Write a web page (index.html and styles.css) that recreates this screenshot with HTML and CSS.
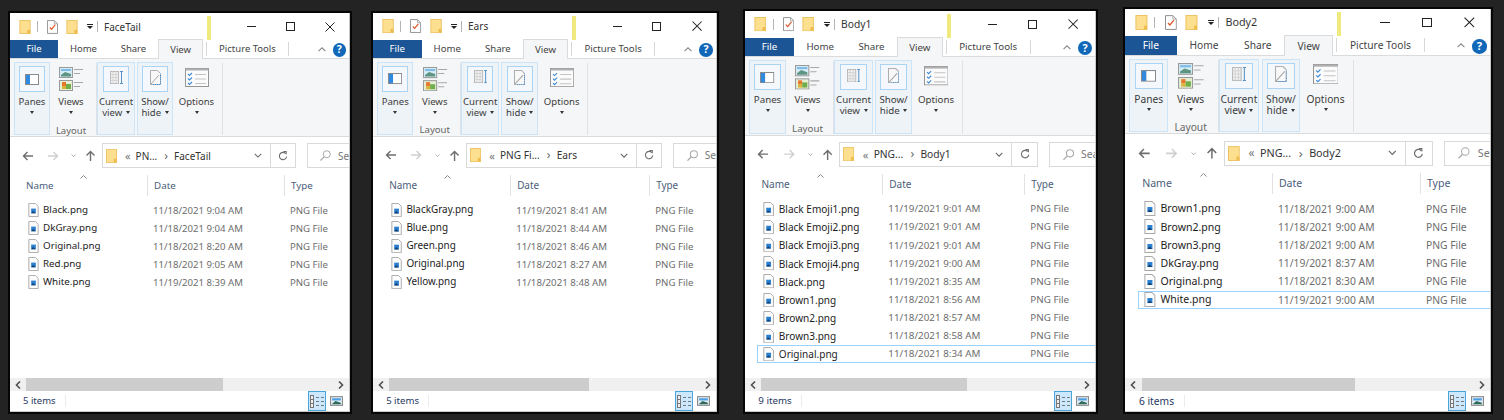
FILE: index.html
```html
<!DOCTYPE html>
<html lang="en">
<head>
<meta charset="utf-8">
<title>Explorer windows</title>
<link rel="stylesheet" href="styles.css">
</head>
<body>
<svg class="defs" aria-hidden="true">
  <symbol id="folder" viewBox="0 0 12 15"><rect x=".5" y=".5" width="11" height="14" fill="#fde08f" stroke="#edc262"/><rect x="8.5" y="10.5" width="3" height="4" fill="#eebd4e"/></symbol>
  <symbol id="doccheck" viewBox="0 0 12 15"><path d="M.5.5H8L11.5 4V14.5H.5Z" fill="#fff" stroke="#8d8d8d"/><path d="M8 .5V4H11.5" fill="none" stroke="#aaa"/><path d="M3 8l2 2 4-5" fill="none" stroke="#e0562a" stroke-width="1.3"/></symbol>
  <symbol id="png" viewBox="0 0 11 15"><path d="M.5.5H7.5L10.500 3.500V14.500H.5Z" fill="#fdfdfd" stroke="#a8a8a8"/><rect x="3" y="6" width="5" height="5" fill="#2a7fd0"/><path d="M3 11L5 8.500 8 11Z" fill="#123f6e"/></symbol>
  <symbol id="panes" viewBox="0 0 14 11"><rect width="14" height="11" fill="#8a8a8a"/><rect x="1" y="1" width="4" height="9" fill="#2f8ae0"/><rect x="5" y="1" width="8" height="9" fill="#fff"/></symbol>
  <symbol id="views" viewBox="0 0 24 24"><rect x=".5" y=".5" width="13" height="10" fill="#d4ecf7" stroke="#9a9a9a"/><path d="M2 8L6 5 12 7V9.500H2Z" fill="#5f9580"/><rect x="2" y="2" width="10" height="2" fill="#7fbbe4"/><rect x=".5" y="13.500" width="13" height="10" fill="#e6efd4" stroke="#9a9a9a"/><rect x="3" y="15" width="4" height="4" fill="#e8772e"/><rect x="7" y="17" width="5" height="5" fill="#6fae4c"/><rect x="3" y="19" width="4" height="3" fill="#d9b338"/><path d="M15 2.500H24M15 6.500H21M15 15.500H24M15 19.500H21" stroke="#a8a8a8"/></symbol>
  <symbol id="current" viewBox="0 0 13 13"><rect x=".5" y=".5" width="8" height="12" fill="#f2f2f2" stroke="#b8b8b8"/><path d="M.5 3.500H8.500M.5 6.500H8.500M.5 9.500H8.500M3 .5V12.500M6 .5V12.500" stroke="#d4d4d4"/><path d="M11.500 0V13M10 .5H13M10 12.500H13" stroke="#5b93c4"/></symbol>
  <symbol id="show" viewBox="0 0 11 15"><path d="M.5.5H7.500L10.500 3.500V14.500H.5Z" fill="#f8f8f8" stroke="#aeaeae"/><path d="M.5 14.500L9 5" stroke="#a6a6a6"/><path d="M10.500 5V14.500H2" fill="none" stroke="#3a8fdb" stroke-dasharray="1 1"/></symbol>
  <symbol id="options" viewBox="0 0 24 19"><rect x=".5" y=".5" width="23" height="18" fill="#fbfbfb" stroke="#969696"/><rect x=".5" y=".5" width="23" height="2" fill="#b0b0b0"/><path d="M3 6l1.500 1.500L7 5M3 10.500l1.500 1.500L7 9.500M3 15l1.500 1.500L7 14" fill="none" stroke="#3f8ad6" stroke-width="1.100"/><path d="M10 6.500H21M10 11H21M10 15.500H21" stroke="#c4c4c4"/></symbol>
  <symbol id="arrow" viewBox="0 0 11 10"><path d="M11 5H1.500M5.500 1L1.500 5 5.500 9" fill="none" stroke="currentColor" stroke-width="1.400"/></symbol>
  <symbol id="up" viewBox="0 0 11 11"><path d="M5.500 11V1.500M1.500 5.500L5.500 1.500 9.500 5.500" fill="none" stroke="#6e6e6e" stroke-width="1.400"/></symbol>
  <symbol id="chev" viewBox="0 0 10 6"><path d="M1 1L5 5 9 1" fill="none" stroke="currentColor" stroke-width="1.300"/></symbol>
  <symbol id="refresh" viewBox="0 0 11 11"><path d="M8.500 2.800A4 4 0 1 0 9.500 6" fill="none" stroke="#6e6e6e" stroke-width="1.200"/><path d="M6 .5H9V3.500" fill="none" stroke="#6e6e6e" stroke-width="1.200"/></symbol>
  <symbol id="search" viewBox="0 0 11 11"><circle cx="6.800" cy="4.200" r="3.500" fill="none" stroke="#a8a8a8"/><path d="M4.300 6.700L.5 10.500" stroke="#a8a8a8" stroke-width="1.200"/></symbol>
  <symbol id="close" viewBox="0 0 10 10"><path d="M.5.5L9.500 9.500M9.500.5L.5 9.500" stroke="#222" stroke-width="1"/></symbol>
  <symbol id="caret" viewBox="0 0 7 4"><path d="M.5 3.500L3.500.5 6.500 3.500" fill="none" stroke="#8a8a8a"/></symbol>
  <symbol id="left" viewBox="0 0 6 8"><path d="M5 .5L1.500 4 5 7.500" fill="none" stroke="#505050" stroke-width="1.600"/></symbol>
  <symbol id="right" viewBox="0 0 6 8"><path d="M1 .5L4.500 4 1 7.500" fill="none" stroke="#505050" stroke-width="1.600"/></symbol>
  <symbol id="details" viewBox="0 0 14 13"><rect x=".5" y=".5" width="3" height="12" fill="#eee" stroke="#777"/><path d="M.5 4.500H3.500M.5 8.500H3.500" stroke="#777"/><path d="M6 2.500H9M11 2.500H14M6 6.500H9M11 6.500H14M6 10.500H9M11 10.500H14" stroke="#777"/></symbol>
  <symbol id="thumb" viewBox="0 0 12 9"><rect x=".5" y=".5" width="11" height="8" fill="#e4eef6" stroke="#8a8a8a"/><rect x="2" y="2" width="8" height="2" fill="#4a9de0"/><path d="M2 7L5 4.500 10 6V7.500H2Z" fill="#2f6b58"/></symbol>
</svg>

<main class="desk">

<section class="win w1">
  <header class="title">
    <div class="tleft">
      <svg class="qa-f"><use href="#folder"/></svg><i class="qs"></i>
      <svg class="qa-d"><use href="#doccheck"/></svg>
      <svg class="qa-g"><use href="#folder"/></svg>
      <span class="qa-m"></span><i class="qs q2"></i>
      <span class="ttext">FaceTail</span>
    </div>
    <i class="ybar"></i>
    <span class="wmin"></span><span class="wmax"></span><svg class="wclose"><use href="#close"/></svg>
  </header>
  <nav class="tabs">
    <span class="tab file">File</span><span class="tab">Home</span><span class="tab">Share</span><span class="tab on">View</span>
    <span class="tab pic">Picture Tools</span>
    <svg class="collapse"><use href="#caret"/></svg><span class="help">?</span>
  </nav>
  <div class="ribbon">
    <div class="rb hot panes"><span class="box"><svg class="i-panes"><use href="#panes"/></svg></span><span class="lb">Panes</span><span class="dn"></span></div>
    <div class="rb viewsb"><span class="bare"><svg class="i-views"><use href="#views"/></svg></span><span class="lb">Views</span><span class="dn"></span><span class="grp">Layout</span></div>
    <i class="rsep"></i>
    <div class="rb hot cur"><span class="box"><svg class="i-cur"><use href="#current"/></svg></span><span class="lb">Current</span><span class="lb">view <b class="dni"></b></span></div>
    <div class="rb hot shw"><span class="box"><svg class="i-show"><use href="#show"/></svg></span><span class="lb">Show/</span><span class="lb">hide <b class="dni"></b></span></div>
    <div class="rb opt"><span class="bare"><svg class="i-opt"><use href="#options"/></svg></span><span class="lb">Options</span><span class="dn"></span></div>
    <i class="rsep"></i>
  </div>
  <div class="nav">
    <svg class="back"><use href="#arrow"/></svg><svg class="fwd"><use href="#arrow"/></svg><svg class="hist"><use href="#chev"/></svg><svg class="upa"><use href="#up"/></svg>
    <div class="addr"><svg class="a-f"><use href="#folder"/></svg><span class="lq">«</span><span class="cr">PN...</span><span class="gt">›</span><span class="cr">FaceTail</span><svg class="a-c"><use href="#chev"/></svg><span class="a-r"><svg class="a-ri"><use href="#refresh"/></svg></span></div>
    <div class="srch"><svg class="s-i"><use href="#search"/></svg><span class="s-t">Search</span></div>
  </div>
  <div class="cols"><span class="h hn">Name<svg class="sort"><use href="#caret"/></svg></span><span class="h">Date</span><span class="h">Type</span></div>
  <ul class="list">
    <li class="row"><span class="fn"><svg class="pi"><use href="#png"/></svg>Black.png</span><span class="dt">11/18/2021 9:04 AM</span><span class="dt">PNG File</span></li>
    <li class="row"><span class="fn"><svg class="pi"><use href="#png"/></svg>DkGray.png</span><span class="dt">11/18/2021 9:04 AM</span><span class="dt">PNG File</span></li>
    <li class="row"><span class="fn"><svg class="pi"><use href="#png"/></svg>Original.png</span><span class="dt">11/18/2021 8:20 AM</span><span class="dt">PNG File</span></li>
    <li class="row"><span class="fn"><svg class="pi"><use href="#png"/></svg>Red.png</span><span class="dt">11/18/2021 9:05 AM</span><span class="dt">PNG File</span></li>
    <li class="row"><span class="fn"><svg class="pi"><use href="#png"/></svg>White.png</span><span class="dt">11/19/2021 8:39 AM</span><span class="dt">PNG File</span></li>
  </ul>
  <div class="hbar"><svg class="sl"><use href="#left"/></svg><i class="sth"></i><svg class="sr"><use href="#right"/></svg></div>
  <footer class="status"><span class="cnt">5 items</span><span class="vbtn"><svg class="v-d"><use href="#details"/></svg></span><svg class="v-t"><use href="#thumb"/></svg></footer>
</section>

<section class="win w2">
  <header class="title">
    <div class="tleft">
      <svg class="qa-f"><use href="#folder"/></svg><i class="qs"></i>
      <svg class="qa-d"><use href="#doccheck"/></svg>
      <svg class="qa-g"><use href="#folder"/></svg>
      <span class="qa-m"></span><i class="qs q2"></i>
      <span class="ttext">Ears</span>
    </div>
    <i class="ybar"></i>
    <span class="wmin"></span><span class="wmax"></span><svg class="wclose"><use href="#close"/></svg>
  </header>
  <nav class="tabs">
    <span class="tab file">File</span><span class="tab">Home</span><span class="tab">Share</span><span class="tab on">View</span>
    <span class="tab pic">Picture Tools</span>
    <svg class="collapse"><use href="#caret"/></svg><span class="help">?</span>
  </nav>
  <div class="ribbon">
    <div class="rb hot panes"><span class="box"><svg class="i-panes"><use href="#panes"/></svg></span><span class="lb">Panes</span><span class="dn"></span></div>
    <div class="rb viewsb"><span class="bare"><svg class="i-views"><use href="#views"/></svg></span><span class="lb">Views</span><span class="dn"></span><span class="grp">Layout</span></div>
    <i class="rsep"></i>
    <div class="rb hot cur"><span class="box"><svg class="i-cur"><use href="#current"/></svg></span><span class="lb">Current</span><span class="lb">view <b class="dni"></b></span></div>
    <div class="rb hot shw"><span class="box"><svg class="i-show"><use href="#show"/></svg></span><span class="lb">Show/</span><span class="lb">hide <b class="dni"></b></span></div>
    <div class="rb opt"><span class="bare"><svg class="i-opt"><use href="#options"/></svg></span><span class="lb">Options</span><span class="dn"></span></div>
    <i class="rsep"></i>
  </div>
  <div class="nav">
    <svg class="back"><use href="#arrow"/></svg><svg class="fwd"><use href="#arrow"/></svg><svg class="hist"><use href="#chev"/></svg><svg class="upa"><use href="#up"/></svg>
    <div class="addr"><svg class="a-f"><use href="#folder"/></svg><span class="lq">«</span><span class="cr">PNG Fi...</span><span class="gt">›</span><span class="cr">Ears</span><svg class="a-c"><use href="#chev"/></svg><span class="a-r"><svg class="a-ri"><use href="#refresh"/></svg></span></div>
    <div class="srch"><svg class="s-i"><use href="#search"/></svg><span class="s-t">Search</span></div>
  </div>
  <div class="cols"><span class="h hn">Name<svg class="sort"><use href="#caret"/></svg></span><span class="h">Date</span><span class="h">Type</span></div>
  <ul class="list">
    <li class="row"><span class="fn"><svg class="pi"><use href="#png"/></svg>BlackGray.png</span><span class="dt">11/19/2021 8:41 AM</span><span class="dt">PNG File</span></li>
    <li class="row"><span class="fn"><svg class="pi"><use href="#png"/></svg>Blue.png</span><span class="dt">11/18/2021 8:44 AM</span><span class="dt">PNG File</span></li>
    <li class="row"><span class="fn"><svg class="pi"><use href="#png"/></svg>Green.png</span><span class="dt">11/18/2021 8:46 AM</span><span class="dt">PNG File</span></li>
    <li class="row"><span class="fn"><svg class="pi"><use href="#png"/></svg>Original.png</span><span class="dt">11/18/2021 8:27 AM</span><span class="dt">PNG File</span></li>
    <li class="row"><span class="fn"><svg class="pi"><use href="#png"/></svg>Yellow.png</span><span class="dt">11/18/2021 8:48 AM</span><span class="dt">PNG File</span></li>
  </ul>
  <div class="hbar"><svg class="sl"><use href="#left"/></svg><i class="sth"></i><svg class="sr"><use href="#right"/></svg></div>
  <footer class="status"><span class="cnt">5 items</span><span class="vbtn"><svg class="v-d"><use href="#details"/></svg></span><svg class="v-t"><use href="#thumb"/></svg></footer>
</section>

<section class="win w3">
  <header class="title">
    <div class="tleft">
      <svg class="qa-f"><use href="#folder"/></svg><i class="qs"></i>
      <svg class="qa-d"><use href="#doccheck"/></svg>
      <svg class="qa-g"><use href="#folder"/></svg>
      <span class="qa-m"></span><i class="qs q2"></i>
      <span class="ttext">Body1</span>
    </div>
    <i class="ybar"></i>
    <span class="wmin"></span><span class="wmax"></span><svg class="wclose"><use href="#close"/></svg>
  </header>
  <nav class="tabs">
    <span class="tab file">File</span><span class="tab">Home</span><span class="tab">Share</span><span class="tab on">View</span>
    <span class="tab pic">Picture Tools</span>
    <svg class="collapse"><use href="#caret"/></svg><span class="help">?</span>
  </nav>
  <div class="ribbon">
    <div class="rb hot panes"><span class="box"><svg class="i-panes"><use href="#panes"/></svg></span><span class="lb">Panes</span><span class="dn"></span></div>
    <div class="rb viewsb"><span class="bare"><svg class="i-views"><use href="#views"/></svg></span><span class="lb">Views</span><span class="dn"></span><span class="grp">Layout</span></div>
    <i class="rsep"></i>
    <div class="rb hot cur"><span class="box"><svg class="i-cur"><use href="#current"/></svg></span><span class="lb">Current</span><span class="lb">view <b class="dni"></b></span></div>
    <div class="rb hot shw"><span class="box"><svg class="i-show"><use href="#show"/></svg></span><span class="lb">Show/</span><span class="lb">hide <b class="dni"></b></span></div>
    <div class="rb opt"><span class="bare"><svg class="i-opt"><use href="#options"/></svg></span><span class="lb">Options</span><span class="dn"></span></div>
    <i class="rsep"></i>
  </div>
  <div class="nav">
    <svg class="back"><use href="#arrow"/></svg><svg class="fwd"><use href="#arrow"/></svg><svg class="hist"><use href="#chev"/></svg><svg class="upa"><use href="#up"/></svg>
    <div class="addr"><svg class="a-f"><use href="#folder"/></svg><span class="lq">«</span><span class="cr">PNG...</span><span class="gt">›</span><span class="cr">Body1</span><svg class="a-c"><use href="#chev"/></svg><span class="a-r"><svg class="a-ri"><use href="#refresh"/></svg></span></div>
    <div class="srch"><svg class="s-i"><use href="#search"/></svg><span class="s-t">Search</span></div>
  </div>
  <div class="cols"><span class="h hn">Name<svg class="sort"><use href="#caret"/></svg></span><span class="h">Date</span><span class="h">Type</span></div>
  <ul class="list">
    <li class="row"><span class="fn"><svg class="pi"><use href="#png"/></svg>Black Emoji1.png</span><span class="dt">11/19/2021 9:01 AM</span><span class="dt">PNG File</span></li>
    <li class="row"><span class="fn"><svg class="pi"><use href="#png"/></svg>Black Emoji2.png</span><span class="dt">11/19/2021 9:01 AM</span><span class="dt">PNG File</span></li>
    <li class="row"><span class="fn"><svg class="pi"><use href="#png"/></svg>Black Emoji3.png</span><span class="dt">11/19/2021 9:01 AM</span><span class="dt">PNG File</span></li>
    <li class="row"><span class="fn"><svg class="pi"><use href="#png"/></svg>Black Emoji4.png</span><span class="dt">11/19/2021 9:00 AM</span><span class="dt">PNG File</span></li>
    <li class="row"><span class="fn"><svg class="pi"><use href="#png"/></svg>Black.png</span><span class="dt">11/19/2021 8:35 AM</span><span class="dt">PNG File</span></li>
    <li class="row"><span class="fn"><svg class="pi"><use href="#png"/></svg>Brown1.png</span><span class="dt">11/18/2021 8:56 AM</span><span class="dt">PNG File</span></li>
    <li class="row"><span class="fn"><svg class="pi"><use href="#png"/></svg>Brown2.png</span><span class="dt">11/18/2021 8:57 AM</span><span class="dt">PNG File</span></li>
    <li class="row"><span class="fn"><svg class="pi"><use href="#png"/></svg>Brown3.png</span><span class="dt">11/18/2021 8:58 AM</span><span class="dt">PNG File</span></li>
    <li class="row sel"><span class="fn"><svg class="pi"><use href="#png"/></svg>Original.png</span><span class="dt">11/18/2021 8:34 AM</span><span class="dt">PNG File</span></li>
  </ul>
  <div class="hbar"><svg class="sl"><use href="#left"/></svg><i class="sth"></i><svg class="sr"><use href="#right"/></svg></div>
  <footer class="status"><span class="cnt">9 items</span><span class="vbtn"><svg class="v-d"><use href="#details"/></svg></span><svg class="v-t"><use href="#thumb"/></svg></footer>
</section>

<section class="win w4">
  <header class="title">
    <div class="tleft">
      <svg class="qa-f"><use href="#folder"/></svg><i class="qs"></i>
      <svg class="qa-d"><use href="#doccheck"/></svg>
      <svg class="qa-g"><use href="#folder"/></svg>
      <span class="qa-m"></span><i class="qs q2"></i>
      <span class="ttext">Body2</span>
    </div>
    <i class="ybar"></i>
    <span class="wmin"></span><span class="wmax"></span><svg class="wclose"><use href="#close"/></svg>
  </header>
  <nav class="tabs">
    <span class="tab file">File</span><span class="tab">Home</span><span class="tab">Share</span><span class="tab on">View</span>
    <span class="tab pic">Picture Tools</span>
    <svg class="collapse"><use href="#caret"/></svg><span class="help">?</span>
  </nav>
  <div class="ribbon">
    <div class="rb hot panes"><span class="box"><svg class="i-panes"><use href="#panes"/></svg></span><span class="lb">Panes</span><span class="dn"></span></div>
    <div class="rb viewsb"><span class="bare"><svg class="i-views"><use href="#views"/></svg></span><span class="lb">Views</span><span class="dn"></span><span class="grp">Layout</span></div>
    <i class="rsep"></i>
    <div class="rb hot cur"><span class="box"><svg class="i-cur"><use href="#current"/></svg></span><span class="lb">Current</span><span class="lb">view <b class="dni"></b></span></div>
    <div class="rb hot shw"><span class="box"><svg class="i-show"><use href="#show"/></svg></span><span class="lb">Show/</span><span class="lb">hide <b class="dni"></b></span></div>
    <div class="rb opt"><span class="bare"><svg class="i-opt"><use href="#options"/></svg></span><span class="lb">Options</span><span class="dn"></span></div>
    <i class="rsep"></i>
  </div>
  <div class="nav">
    <svg class="back"><use href="#arrow"/></svg><svg class="fwd"><use href="#arrow"/></svg><svg class="hist"><use href="#chev"/></svg><svg class="upa"><use href="#up"/></svg>
    <div class="addr"><svg class="a-f"><use href="#folder"/></svg><span class="lq">«</span><span class="cr">PNG...</span><span class="gt">›</span><span class="cr">Body2</span><svg class="a-c"><use href="#chev"/></svg><span class="a-r"><svg class="a-ri"><use href="#refresh"/></svg></span></div>
    <div class="srch"><svg class="s-i"><use href="#search"/></svg><span class="s-t">Search</span></div>
  </div>
  <div class="cols"><span class="h hn">Name<svg class="sort"><use href="#caret"/></svg></span><span class="h">Date</span><span class="h">Type</span></div>
  <ul class="list">
    <li class="row"><span class="fn"><svg class="pi"><use href="#png"/></svg>Brown1.png</span><span class="dt">11/18/2021 9:00 AM</span><span class="dt">PNG File</span></li>
    <li class="row"><span class="fn"><svg class="pi"><use href="#png"/></svg>Brown2.png</span><span class="dt">11/18/2021 9:00 AM</span><span class="dt">PNG File</span></li>
    <li class="row"><span class="fn"><svg class="pi"><use href="#png"/></svg>Brown3.png</span><span class="dt">11/18/2021 9:00 AM</span><span class="dt">PNG File</span></li>
    <li class="row"><span class="fn"><svg class="pi"><use href="#png"/></svg>DkGray.png</span><span class="dt">11/19/2021 8:37 AM</span><span class="dt">PNG File</span></li>
    <li class="row"><span class="fn"><svg class="pi"><use href="#png"/></svg>Original.png</span><span class="dt">11/18/2021 8:30 AM</span><span class="dt">PNG File</span></li>
    <li class="row sel"><span class="fn"><svg class="pi"><use href="#png"/></svg>White.png</span><span class="dt">11/19/2021 9:00 AM</span><span class="dt">PNG File</span></li>
  </ul>
  <div class="hbar"><svg class="sl"><use href="#left"/></svg><i class="sth"></i><svg class="sr"><use href="#right"/></svg></div>
  <footer class="status"><span class="cnt">6 items</span><span class="vbtn"><svg class="v-d"><use href="#details"/></svg></span><svg class="v-t"><use href="#thumb"/></svg></footer>
</section>

</main>
</body>
</html>
```
FILE: styles.css
```css
* { box-sizing: border-box; }
html, body { margin: 0; height: 100%; }
body { background: #232323; overflow: hidden; font-family: "Noto Sans", "Open Sans", sans-serif; color: #333; }
.defs { position: absolute; width: 0; height: 0; }
.desk { position: relative; width: 1504px; height: 420px; }
svg { display: block; flex: none; }
i, b { display: block; font-style: normal; }

.win {
  --k: 1; --v: 1; --c1: 125px; --c2: 137px; --th: 197px;
  position: absolute; display: flex; flex-direction: column; overflow: hidden;
  background: #fff; box-shadow: 0 0 0 2px #060606;
  border-right: 1px solid #c8c8c8; border-bottom: 1px solid #c8c8c8;
  font-size: calc(var(--k) * 9.5px); line-height: 1;
}
.w1 { left: 10px; top: 13px; width: 340px; height: 399px; }
.w2 { left: 373px; top: 13px; width: 344px; height: 399px; --k: 1.012; --c1: 125px; --c2: 139px; --th: 200px; }
.w3 { left: 745px; top: 11px; width: 351px; height: 401px; --k: 1.025; --v: 1.005; --c1: 125px; --c2: 142px; --th: 206px; }
.w4 { left: 1125px; top: 9px; width: 366px; height: 403px; --k: 1.076; --v: 1.012; --c1: 134px; --c2: 148px; --th: 213px; }

/* title bar */
.title { display: flex; align-items: center; height: calc(var(--v) * 27px); flex: none; }
.tleft { display: flex; align-items: center; width: calc(var(--k) * 197px); flex: none; }
.qa-f { margin-left: calc(var(--k) * 9px); width: calc(var(--k) * 12px); height: calc(var(--k) * 14px); }
.qs { width: 1px; height: 11px; background: #b5b5b5; margin-left: calc(var(--k) * 6px); }
.qa-d { margin-left: calc(var(--k) * 9px); width: calc(var(--k) * 11px); height: calc(var(--k) * 14px); }
.qa-g { margin-left: calc(var(--k) * 8px); width: calc(var(--k) * 12px); height: calc(var(--k) * 14px); }
.qa-m { margin-left: calc(var(--k) * 9px); width: 6px; height: 5px; border-top: 1px solid #222; position: relative; }
.qa-m::after { content: ""; position: absolute; left: 0; top: 1px; border: 3px solid transparent; border-top: 3px solid #222; border-bottom: 0; }
.q2 { margin-left: calc(var(--k) * 4px); }
.ttext { margin-left: calc(var(--k) * 6px); font-size: calc(var(--k) * 10px); color: #333; }
.ybar { align-self: stretch; margin-top: 3px; width: calc(var(--k) * 4px); background: #f0e97e; flex: none; }
.wmin { margin-left: calc(var(--k) * 36px); width: calc(var(--k) * 9px); height: 1px; background: #222; }
.wmax { margin-left: calc(var(--k) * 30px); width: calc(var(--k) * 9px); height: calc(var(--k) * 9px); border: 1px solid #222; }
.wclose { margin-left: calc(var(--k) * 30px); width: calc(var(--k) * 10px); height: calc(var(--k) * 10px); }

/* tabs */
.tabs { display: flex; align-items: stretch; height: calc(var(--v) * 19px); flex: none; border-bottom: 1px solid #dadbdc; color: #444; }
.tab { display: flex; align-items: center; padding: 0 calc(var(--k) * 11.900px); }
.file { width: calc(var(--k) * 48px); justify-content: center; padding: 0; background: #1c5595; color: #fff; }
.on { width: calc(var(--k) * 45px); justify-content: center; padding: 0; height: calc(var(--v) * 20px); margin-top: -1px; background: #f5f6f7; border: 1px solid #dadbdc; border-bottom: 0; }
.pic { margin-left: calc(var(--k) * 3px); height: calc(var(--v) * 14px); padding: 0 calc(var(--k) * 12px); border-left: 1px solid #d8d8d8; border-right: 1px solid #d8d8d8; margin-top: 2px; white-space: nowrap; }
.collapse { margin: calc(var(--v) * 7px) 0 0 auto; width: 8px; height: 5px; }
.help { margin: 3px calc(var(--k) * 3px) 0 calc(var(--k) * 7px); width: calc(var(--k) * 13.500px); height: calc(var(--k) * 13.500px); border-radius: 50%; background: #1268b8; color: #fff; font: bold calc(var(--k) * 10.500px)/calc(var(--k) * 13.500px) "Noto Sans", sans-serif; text-align: center; }

/* ribbon */
.ribbon { display: flex; height: calc(var(--v) * 78px); flex: none; padding: calc(var(--v) * 3px) 0 calc(var(--v) * 1px) calc(var(--k) * 4px); background: #f5f6f7; border-bottom: 1px solid #dadbdc; }
.rb { display: flex; flex-direction: column; align-items: center; flex: none; position: relative; color: #3c3c3c; }
.hot { background: #eef3f8; border: 1px solid #cbe4f8; }
.panes { width: calc(var(--k) * 36px); }
.viewsb { width: calc(var(--k) * 46px); padding-right: calc(var(--k) * 4px); }
.cur { width: calc(var(--k) * 38px); margin-right: calc(var(--k) * 2px); }
.shw { width: calc(var(--k) * 36px); }
.opt { width: calc(var(--k) * 47px); }
.box { display: flex; align-items: center; justify-content: center; margin-top: 3px; width: calc(var(--k) * 26px); height: calc(var(--v) * 26px); background: #f4f8fc; border: 1px solid #a9d4f5; flex: none; }
.bare { display: flex; align-items: center; justify-content: center; margin-top: 4px; height: calc(var(--v) * 26px); flex: none; }
.lb { display: block; margin-top: 5px; height: 10px; line-height: 10px; white-space: nowrap; }
.lb + .lb { margin-top: 1px; }
.dn { margin-top: 4px; width: 0; height: 0; border: 2.500px solid transparent; border-top: 3px solid #333; border-bottom: 0; }
.dni { display: inline-block; vertical-align: 2px; margin-left: 1px; width: 0; height: 0; border: 2.500px solid transparent; border-top: 3px solid #333; border-bottom: 0; }
.grp { position: absolute; left: 0; right: calc(var(--k) * 4px); bottom: 0; text-align: center; color: #666; }
.rsep { width: 1px; margin-top: 1px; background: #dfe1e4; flex: none; }
.opt + .rsep { margin-left: calc(var(--k) * 2px); }
.i-panes { width: calc(var(--k) * 14px); height: calc(var(--k) * 11px); }
.i-views { width: calc(var(--k) * 24px); height: calc(var(--k) * 24px); }
.i-cur { width: calc(var(--k) * 13px); height: calc(var(--k) * 13px); margin-bottom: 4px; }
.i-show { width: calc(var(--k) * 11px); height: calc(var(--k) * 15px); margin-bottom: 3px; }
.i-opt { width: calc(var(--k) * 24px); height: calc(var(--k) * 19px); margin-bottom: 3px; }

/* nav */
.nav { display: flex; align-items: center; height: calc(var(--v) * 25px); margin-top: calc(var(--v) * 6px); flex: none; font-size: calc(var(--k) * 10px); }
.back { margin-left: calc(var(--k) * 12px); width: calc(var(--k) * 11px); height: calc(var(--k) * 10px); color: #6e6e6e; }
.fwd { margin-left: calc(var(--k) * 15px); width: calc(var(--k) * 11px); height: calc(var(--k) * 10px); color: #cfcfcf; transform: scaleX(-1); }
.hist { margin-left: calc(var(--k) * 12px); width: calc(var(--k) * 5px); height: calc(var(--k) * 3px); color: #8a8a8a; }
.upa { margin-left: calc(var(--k) * 9px); width: calc(var(--k) * 11px); height: calc(var(--k) * 11px); }
.addr { margin-left: calc(var(--k) * 6px); width: calc(var(--k) * 194px); height: 100%; border: 1px solid #d9d9d9; display: flex; align-items: center; flex: none; color: #333; white-space: nowrap; }
.a-f { margin-left: calc(var(--k) * 3px); width: calc(var(--k) * 11px); height: calc(var(--k) * 14px); }
.lq { margin-left: calc(var(--k) * 8px); color: #777; font-size: calc(var(--k) * 11px); }
.cr { margin-left: calc(var(--k) * 5px); }
.gt { margin-left: calc(var(--k) * 7px); color: #666; font-size: calc(var(--k) * 12px); }
.gt + .cr { margin-left: calc(var(--k) * 6px); }
.a-c { margin-left: auto; margin-right: calc(var(--k) * 8px); width: calc(var(--k) * 8px); height: calc(var(--k) * 5px); color: #666; }
.a-r { display: flex; align-items: center; justify-content: center; width: calc(var(--k) * 25px); height: 100%; border-left: 1px solid #d9d9d9; flex: none; }
.a-ri { width: calc(var(--k) * 10px); height: calc(var(--k) * 10px); }
.srch { margin-left: calc(var(--k) * 11px); width: 120px; height: 100%; border: 1px solid #d9d9d9; display: flex; align-items: center; flex: none; color: #777; }
.s-i { margin-left: calc(var(--k) * 12px); width: calc(var(--k) * 11px); height: calc(var(--k) * 11px); }
.s-t { margin-left: calc(var(--k) * 7px); }

/* columns */
.cols { display: grid; grid-template-columns: var(--c1) var(--c2) 1fr; margin: calc(var(--v) * 7px) 0 0 calc(var(--k) * 12px); height: calc(var(--v) * 21px); flex: none; color: #4c607a; }
.h { display: flex; align-items: center; position: relative; padding-left: 6px; border-left: 1px solid #e2e2e2; font-size: calc(var(--k) * 9.800px); }
.hn { border-left: 0; padding-left: calc(var(--k) * 4px); }
.sort { position: absolute; left: calc(var(--k) * 58px); top: 0; width: 7px; height: 4px; }

/* list */
.list { list-style: none; margin: 0; padding: calc(var(--v) * 5.400px) 0 0 calc(var(--k) * 12px); flex: 1; min-height: 0; overflow: hidden; }
.row { display: grid; grid-template-columns: var(--c1) var(--c2) 1fr; align-items: center; height: calc(var(--v) * 18px); margin-right: -8px; }
.sel { outline: 1px solid #99d1ff; outline-offset: -1px; }
.fn { display: flex; align-items: center; font-size: calc(var(--k) * 9.800px); color: #1c1c1c; white-space: nowrap; padding-left: calc(var(--k) * 6px); }
.pi { width: calc(var(--k) * 11px); height: calc(var(--k) * 14px); margin-right: calc(var(--k) * 4px); }
.dt { color: #6d6d6d; white-space: nowrap; padding-left: 6px; font-size: calc(var(--k) * 9.600px); }

/* scroll + status */
.hbar { display: flex; align-items: center; height: 13px; flex: none; background: #f0f0f0; }
.sl { margin-left: calc(var(--k) * 5px); width: 6px; height: 8px; }
.sth { margin-left: calc(var(--k) * 5px); width: var(--th); height: 100%; background: #cdcdcd; }
.sr { margin-left: auto; margin-right: calc(var(--k) * 5px); width: 6px; height: 8px; }
.status { display: flex; align-items: center; height: 20px; flex: none; }
.cnt { margin-left: calc(var(--k) * 13px); padding-right: calc(var(--k) * 9px); border-right: 1px solid #ececec; line-height: 12px; color: #1f3864; }
.vbtn { display: flex; align-items: center; justify-content: center; margin-left: auto; width: 18px; height: 20px; background: #cce8ff; border: 1px solid #4ba6d8; }
.v-d { width: 14px; height: 13px; }
.v-t { margin: 0 calc(var(--k) * 6px) 0 calc(var(--k) * 4px); width: 13px; height: 10px; }
```
